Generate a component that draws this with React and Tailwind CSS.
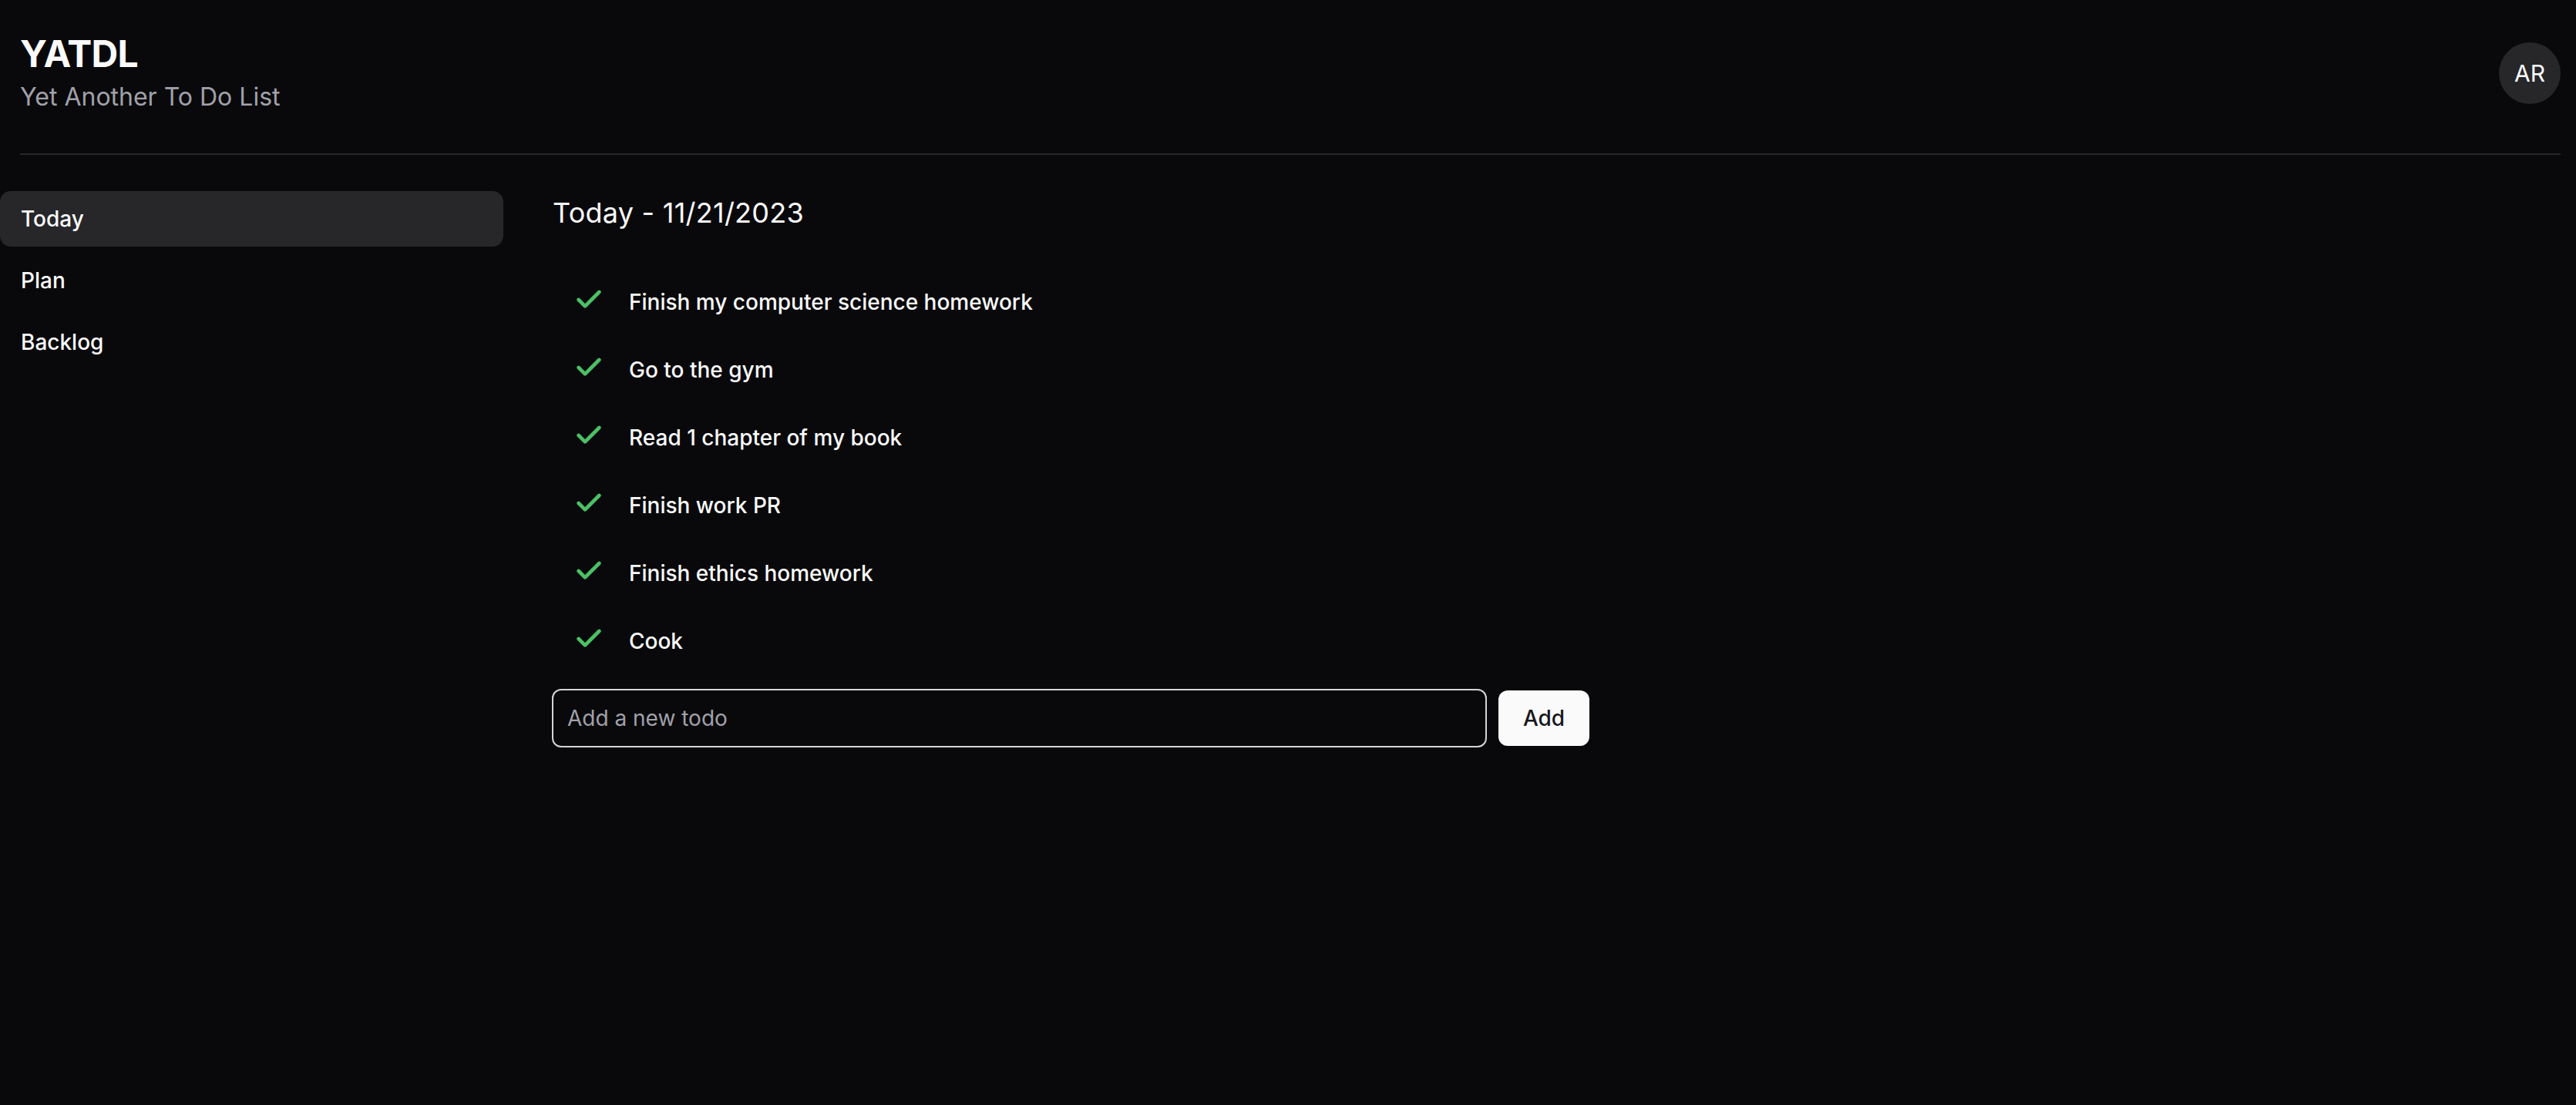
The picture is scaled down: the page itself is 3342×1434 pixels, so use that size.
import React from "react";
import { Check } from "lucide-react";

const todos = [
  "Finish my computer science homework",
  "Go to the gym",
  "Read 1 chapter of my book",
  "Finish work PR",
  "Finish ethics homework",
  "Cook",
];

const nav = ["Today", "Plan", "Backlog"];

export default function App() {
  return (
    <div className="min-h-screen bg-[#09090b] text-[#fafafa] font-['Inter',sans-serif]">
      <header className="flex items-center justify-between pl-[26px] pr-[20px] pt-[38px] pb-[49px]">
        <div>
          <h1 className="text-[48px] leading-[64px] font-bold tracking-[-0.8px]">YATDL</h1>
          <p className="text-[32px] leading-[48px] text-[#a1a1aa]">Yet Another To Do List</p>
        </div>
        <div className="w-[80px] h-[80px] mt-[2px] rounded-full bg-[#27272a] flex items-center justify-center text-[30px] text-[#fafafa]">
          AR
        </div>
      </header>
      <div className="ml-[26px] mr-[20px] h-[2px] bg-[#27272a]" />
      <div className="flex gap-[64px] pt-[47px]">
        <aside className="w-[653px] shrink-0 flex flex-col gap-[8px]">
          {nav.map((item, i) => (
            <div
              key={item}
              className={
                "h-[72px] flex items-center px-[27px] rounded-[14px] text-[28px] font-medium " +
                (i === 0 ? "bg-[#27272a]" : "")
              }
            >
              {item}
            </div>
          ))}
        </aside>
        <main className="flex-1">
          <h2 className="text-[36px] leading-[56px] font-normal tracking-[0.25px]">Today - 11/21/2023</h2>
          <ul className="mt-[44px]">
            {todos.map((t) => (
              <li key={t} className="h-[88px] flex items-center pl-[27px] gap-[32px]">
                <Check size={40} strokeWidth={2.8} className="text-[#4cc066] mb-[6px] shrink-0" />
                <span className="text-[28px] leading-[40px] font-medium">{t}</span>
              </li>
            ))}
          </ul>
          <div className="mt-[18px] -ml-[1px] w-[1346px] flex items-center gap-[15px]">
            <input
              type="text"
              placeholder="Add a new todo"
              className="flex-1 h-[76px] border-2 border-[#d4d4d8] rounded-[12px] bg-transparent px-[18px] text-[28px] text-[#fafafa] placeholder:text-[#a1a1aa] outline-none"
            />
            <button className="w-[118px] h-[72px] rounded-[12px] bg-[#fafafa] text-[#18181b] text-[28px] font-medium">
              Add
            </button>
          </div>
        </main>
      </div>
    </div>
  );
}
